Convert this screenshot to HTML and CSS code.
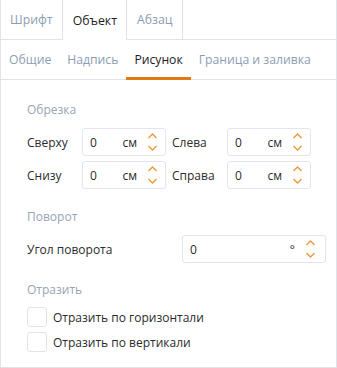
FILE: index.html
```html
<!DOCTYPE html>
<html lang="ru">
<head>
    <meta charset="UTF-8">
    <title>Параметры изображения</title>
    <link rel="stylesheet" href="styles.css">
</head>
<body>
    <div class="panel">
        <div class="tabs">
            <div class="tab">Шрифт</div>
            <div class="tab active">Объект</div>
            <div class="tab">Абзац</div>
        </div>
        <div class="subtabs">
            <div class="subtab">Общие</div>
            <div class="subtab">Надпись</div>
            <div class="subtab active">Рисунок</div>
            <div class="subtab">Граница и заливка</div>
        </div>

        <div class="content">
            <div class="section-title">Обрезка</div>
            <div class="crop-grid">
                <label>Сверху</label>
                <div class="spin"><span class="value">0</span><span class="unit">см</span><span class="arrows"></span></div>
                <label>Слева</label>
                <div class="spin"><span class="value">0</span><span class="unit">см</span><span class="arrows"></span></div>
                <label>Снизу</label>
                <div class="spin"><span class="value">0</span><span class="unit">см</span><span class="arrows"></span></div>
                <label>Справа</label>
                <div class="spin"><span class="value">0</span><span class="unit">см</span><span class="arrows"></span></div>
            </div>

            <div class="section-title rotate-title">Поворот</div>
            <div class="rotate-row">
                <label>Угол поворота</label>
                <div class="spin wide"><span class="value">0</span><span class="unit">°</span><span class="arrows"></span></div>
            </div>

            <div class="section-title flip-title">Отразить</div>
            <div class="check-row"><span class="box"></span>Отразить по горизонтали</div>
            <div class="check-row"><span class="box"></span>Отразить по вертикали</div>
        </div>
    </div>

    <script>
        // same chevron pair in every spin box
        const chevrons = '<svg width="11" height="22" viewBox="0 0 11 22">' +
            '<path d="M1.5 7 L5.5 3 L9.5 7" fill="none" stroke="#ec9a3a" stroke-width="1.4"/>' +
            '<path d="M1.5 15 L5.5 19 L9.5 15" fill="none" stroke="#ec9a3a" stroke-width="1.4"/>' +
            '</svg>';
        document.querySelectorAll('.arrows').forEach(el => {
            el.innerHTML = chevrons;
        });
    </script>
</body>
</html>
```
FILE: styles.css
```css
body {
    margin: 0;
    background: #ffffff;
    font-family: "Open Sans", "Noto Sans", sans-serif;
    font-size: 12px;
    color: #2b2b2b;
}

.panel {
    width: 337px;
    height: 368px;
    box-sizing: border-box;
    border-left: 1px solid #dfe4ea;
    border-right: 1px solid #dfe4ea;
    border-bottom: 1px solid #dfe4ea;
}

.tabs {
    display: flex;
    height: 40px;
    box-sizing: border-box;
    border-bottom: 1px solid #dfe4ea;
    margin-left: -1px;
}

.tab {
    display: flex;
    align-items: center;
    padding: 0 9px 0 10px;
    color: #8c9db3;
    font-size: 12.3px;
}

.tab.active {
    color: #1c1c1c;
    border-left: 1px solid #dfe4ea;
    border-right: 1px solid #dfe4ea;
    margin-bottom: -1px;
    background: #ffffff;
}

.tab:last-child {
    border-right: 1px solid #dfe4ea;
}

.subtabs {
    display: flex;
    height: 40px;
    box-sizing: border-box;
    border-bottom: 1px solid #dfe4ea;
}

.subtab {
    display: flex;
    align-items: center;
    padding: 0 8px;
    color: #8c9db3;
    font-size: 12.2px;
    border-bottom: 3px solid transparent;
    margin-bottom: -1px;
    padding-top: 2px;
}

.subtab.active {
    color: #1c1c1c;
    border-bottom-color: #e07a10;
}

.content {
    padding: 21px 10px 0 26px;
}

.section-title {
    color: #97a4b4;
    line-height: 18px;
    height: 18px;
}

.crop-grid {
    display: grid;
    grid-template-columns: 49px 84px 49px 84px;
    grid-auto-rows: 28px;
    column-gap: 6px;
    row-gap: 5px;
    margin-top: 9px;
    align-items: center;
}

.spin {
    display: flex;
    align-items: center;
    height: 28px;
    box-sizing: border-box;
    border: 1px solid #e1e6ec;
    border-radius: 3px;
    padding: 0 7px 0 7px;
}

.spin .value {
    flex: 1;
}

.spin .unit {
    margin-right: 10px;
}

.spin .arrows {
    display: flex;
    width: 11px;
    height: 22px;
}

.spin.wide {
    width: 144px;
    padding-right: 9px;
}

.rotate-title {
    margin-top: 19px;
}

.rotate-row {
    display: flex;
    align-items: center;
    justify-content: space-between;
    margin-top: 9px;
}

.flip-title {
    margin-top: 18px;
}

.check-row {
    display: flex;
    align-items: center;
    gap: 6px;
    height: 20px;
    margin-top: 5px;
}

.flip-title + .check-row {
    margin-top: 8px;
}

.check-row .box {
    width: 20px;
    height: 20px;
    box-sizing: border-box;
    border: 1px solid #dfe4ea;
    border-radius: 3px;
}
```
